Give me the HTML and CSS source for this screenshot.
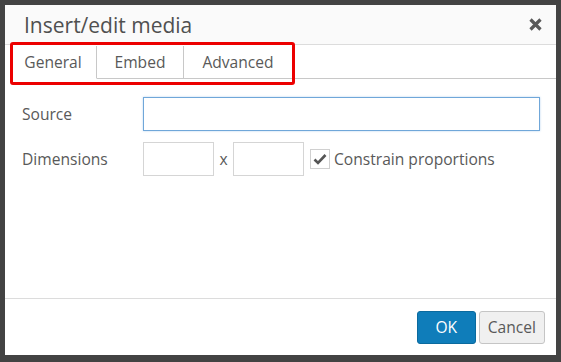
FILE: index.html
```html
<!DOCTYPE html>
<html lang="en">

<head>
    <meta charset="UTF-8">
    <title>Insert/edit media</title>
    <link rel="stylesheet" href="styles.css">
</head>

<body>
    <div class="dialog">
        <div class="dialog-head">
            <h1>Insert/edit media</h1>
            <svg class="close" width="13" height="13" viewBox="0 0 13 13">
                <path d="M1.5 1.5 L11.5 11.5 M11.5 1.5 L1.5 11.5" stroke="#5a5a5a" stroke-width="3.2" />
            </svg>
        </div>

        <div class="tabs">
            <div class="tab active">General</div>
            <div class="tab">Embed</div>
            <div class="tab">Advanced</div>
            <div class="tabs-fill"></div>
        </div>

        <div class="dialog-body">
            <div class="form-row">
                <label class="field-label" for="source">Source</label>
                <input type="text" id="source" class="input source">
            </div>
            <div class="form-row">
                <span class="field-label">Dimensions</span>
                <input type="text" class="input dim">
                <span class="times">x</span>
                <input type="text" class="input dim">
                <span class="check">
                    <svg width="14" height="12" viewBox="0 0 14 12">
                        <path d="M1.5 6.5 L5 10 L12.5 2" fill="none" stroke="#555" stroke-width="2.6" />
                    </svg>
                </span>
                <span class="check-label">Constrain proportions</span>
            </div>
        </div>

        <div class="dialog-foot">
            <button class="btn primary">OK</button>
            <button class="btn">Cancel</button>
        </div>

        <div class="highlight"></div>
    </div>
</body>

</html>
```

FILE: styles.css
```css
body {
    margin: 0;
    padding: 5px;
    background-color: #434343;
    font-family: 'Open Sans', sans-serif;
    color: #595959;
}

.dialog {
    position: relative;
    width: 551px;
    height: 350px;
    background-color: #fff;
    display: flex;
    flex-direction: column;
}

.dialog-head {
    height: 39px;
    background-color: #fafafa;
    border-bottom: 1px solid #dcdcdc;
    display: flex;
    align-items: center;
    justify-content: space-between;
    padding: 0 14px 0 19px;
}

h1 {
    margin: 0;
    font-size: 21px;
    font-weight: normal;
    color: #505050;
}

.tabs {
    display: flex;
    height: 33px;
    padding-left: 5px;
    margin-top: 1px;
}

.tab {
    padding: 0 12px;
    width: 62px;
    text-align: center;
    font-size: 15.6px;
    line-height: 33px;
    color: #595959;
    border-right: 1px solid #c8c8c8;
    border-bottom: 1px solid #c8c8c8;
}

.tab:nth-child(3) {
    width: 84px;
}

.tab.active {
    border-bottom-color: transparent;
}

.tabs-fill {
    flex: 1;
    border-bottom: 1px solid #c8c8c8;
}

.dialog-body {
    flex: 1;
    padding: 18px 16px 0 17px;
    display: flex;
    flex-direction: column;
    gap: 11px;
}

.form-row {
    display: flex;
    align-items: center;
}

.field-label {
    width: 121px;
    font-size: 15.6px;
}

.input {
    box-sizing: border-box;
    height: 34px;
    border: 1px solid #d5d5d5;
    font-family: inherit;
    font-size: 15px;
    padding: 0 6px;
    margin: 0;
    outline: none;
}

.input.source {
    width: 397px;
    border-color: #70a7d9;
    box-shadow: 0 0 2px rgba(80, 150, 220, 0.4);
}

.input.dim {
    width: 71px;
}

.times {
    width: 19px;
    text-align: center;
    font-size: 15.6px;
}

.check {
    box-sizing: border-box;
    width: 20px;
    height: 20px;
    margin-left: 6px;
    border: 1px solid #d0d0d0;
    display: flex;
    align-items: center;
    justify-content: center;
}

.check-label {
    margin-left: 4px;
    font-size: 15.6px;
}

.dialog-foot {
    height: 56px;
    border-top: 1px solid #dcdcdc;
    display: flex;
    justify-content: flex-end;
    align-items: center;
    gap: 3px;
    padding-right: 11px;
}

.btn {
    height: 33px;
    padding: 0 8px;
    font-family: inherit;
    font-size: 15.6px;
    color: #595959;
    background-color: #f0f0f0;
    border: 1px solid #c5c5c5;
    border-radius: 3px;
}

.btn.primary {
    width: 59px;
    background-color: #0f7dba;
    border-color: #0b6a9e;
    color: #fff;
}

.highlight {
    position: absolute;
    left: 5px;
    top: 37px;
    width: 279px;
    height: 37px;
    border: 3px solid #ec0000;
    border-radius: 3px;
}
```
